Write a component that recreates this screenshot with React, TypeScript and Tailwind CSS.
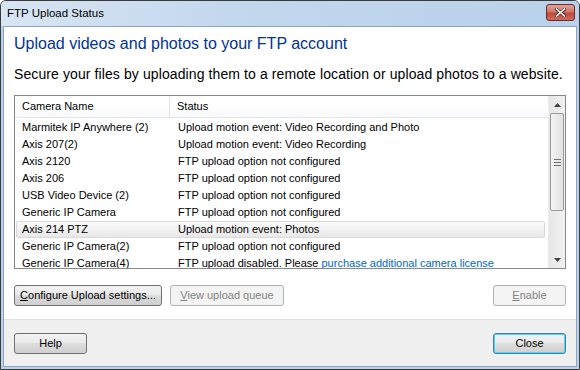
import { FC, ReactNode } from 'react';

const rows: { name: string; status: ReactNode; selected?: boolean }[] = [
  { name: 'Marmitek IP Anywhere (2)', status: 'Upload motion event: Video Recording and Photo' },
  { name: 'Axis 207(2)', status: 'Upload motion event: Video Recording' },
  { name: 'Axis 2120', status: 'FTP upload option not configured' },
  { name: 'Axis 206', status: 'FTP upload option not configured' },
  { name: 'USB Video Device (2)', status: 'FTP upload option not configured' },
  { name: 'Generic IP Camera', status: 'FTP upload option not configured' },
  { name: 'Axis 214 PTZ', status: 'Upload motion event: Photos', selected: true },
  { name: 'Generic IP Camera(2)', status: 'FTP upload option not configured' },
  {
    name: 'Generic IP Camera(4)',
    status: (
      <>
        FTP upload disabled. Please <span className="text-[#0066cc]">purchase additional camera license</span>
      </>
    ),
  },
];

interface BtnProps {
  children: ReactNode;
  width: string;
  disabled?: boolean;
  focused?: boolean;
}

const Btn: FC<BtnProps> = ({ children, width, disabled, focused }) => {
  if (disabled) {
    return (
      <div
        className={`${width} h-[21px] flex items-center justify-center whitespace-nowrap rounded-[3px] border border-[#adb2b5] bg-[#f4f4f4] text-[#838383]`}
      >
        {children}
      </div>
    );
  }
  return (
    <div
      className={`${width} h-[21px] flex items-center justify-center whitespace-nowrap rounded-[3px] border ${
        focused ? 'border-[#3c7fb1] shadow-[inset_0_0_0_1px_#48d8fb]' : 'border-[#707070]'
      } bg-[linear-gradient(#f2f2f2_0%,#ebebeb_45%,#dddddd_50%,#cfcfcf_100%)] text-black`}
    >
      {children}
    </div>
  );
};

const App: FC = () => {
  return (
    <div
      className="w-[580px] h-[370px] flex flex-col bg-[#bcd2ea] border border-[#3a3a3a] rounded-t-[6px] overflow-hidden text-[11px] text-black"
      style={{ fontFamily: '"Liberation Sans", Arial, sans-serif' }}
    >
      {/* Title bar */}
      <div className="h-[25px] shrink-0 flex items-center justify-between pl-[6px] pr-[4px] bg-[linear-gradient(90deg,#d8e5f3_0%,#c3d7ed_40%,#b9d1ea_100%)]">
        <span className="text-[11.5px] text-black">FTP Upload Status</span>
        <div className="w-[29px] h-[17px] -mt-[3px] flex items-center justify-center rounded-[3px] border border-[#6b2b2b] bg-[linear-gradient(#e0a197_0%,#d0766a_45%,#c14a3c_55%,#cf6b5c_100%)]">
          <svg width="11" height="9" viewBox="0 0 11 9">
            <path d="M1 1 L10 8 M10 1 L1 8" stroke="#4a2020" strokeWidth="3" strokeLinecap="square" />
            <path d="M1.5 1 L9.5 8 M9.5 1 L1.5 8" stroke="#ffffff" strokeWidth="1.6" strokeLinecap="square" />
          </svg>
        </div>
      </div>

      {/* Client area */}
      <div className="flex-1 flex flex-col mx-[2px] mb-[2px] border border-[#8ba6c4]">
        <div className="h-[292px] shrink-0 bg-white px-[10px] flex flex-col">
          <div className="mt-[6px] text-[16px] leading-[22px] text-[#003399]">
            Upload videos and photos to your FTP account
          </div>
          <div className="mt-[10px] text-[14px] leading-[18px] tracking-[0.1px]">
            Secure your files by uploading them to a remote location or upload photos to a website.
          </div>

          {/* List view */}
          <div className="mt-[12px] h-[174px] border border-[#828790] flex">
            <div className="flex-1 flex flex-col overflow-hidden">
              <div className="h-[22px] shrink-0 flex border-b border-[#e5e5e5] bg-[linear-gradient(#ffffff_0%,#ffffff_50%,#f7f8fa_100%)]">
                <div className="w-[155px] pl-[7px] flex items-center border-r border-[#e5e5e5]">Camera Name</div>
                <div className="flex-1 pl-[7px] flex items-center">Status</div>
              </div>
              <div className="flex flex-col pt-[1px] pl-[1px] pr-[3px]">
                {rows.map((r) => (
                  <div
                    key={r.name}
                    className={`h-[17px] shrink-0 flex items-center rounded-[2px] ${
                      r.selected
                        ? 'border border-[#d9d9d9] bg-[linear-gradient(#fafafa,#e8e8e8)]'
                        : 'border border-transparent'
                    }`}
                  >
                    <div className="w-[154px] pl-[5px] whitespace-nowrap">{r.name}</div>
                    <div className="flex-1 pl-[7px] whitespace-nowrap">{r.status}</div>
                  </div>
                ))}
              </div>
            </div>

            {/* Scrollbar */}
            <div className="w-[17px] shrink-0 flex flex-col bg-[linear-gradient(90deg,#e6e6e6,#f2f2f2)] border-l border-[#ececec]">
              <div className="h-[17px] flex items-center justify-center">
                <svg width="7" height="4" viewBox="0 0 7 4">
                  <path d="M0 4 L3.5 0 L7 4 Z" fill="#404040" />
                </svg>
              </div>
              <div className="mx-[1px] h-[98px] rounded-[2px] border border-[#9a9a9a] bg-[linear-gradient(90deg,#f4f4f4,#e2e2e2)] flex items-center justify-center">
                <svg width="7" height="7" viewBox="0 0 7 7">
                  <path d="M0 0.5 H7 M0 3.5 H7 M0 6.5 H7" stroke="#707070" strokeWidth="1" />
                </svg>
              </div>
              <div className="flex-1" />
              <div className="h-[17px] flex items-center justify-center">
                <svg width="7" height="4" viewBox="0 0 7 4">
                  <path d="M0 0 L3.5 4 L7 0 Z" fill="#404040" />
                </svg>
              </div>
            </div>
          </div>

          {/* Action buttons */}
          <div className="mt-[16px] flex items-center">
            <Btn width="w-[148px]">
              <span>
                <u>C</u>onfigure Upload settings...
              </span>
            </Btn>
            <div className="ml-[8px]">
              <Btn width="w-[114px]" disabled>
                <span>
                  <u>V</u>iew upload queue
                </span>
              </Btn>
            </div>
            <div className="ml-auto">
              <Btn width="w-[73px]" disabled>
                <span>
                  <u>E</u>nable
                </span>
              </Btn>
            </div>
          </div>
        </div>

        {/* Footer */}
        <div className="flex-1 bg-[#f0f0f0] border-t border-[#dfdfdf] px-[10px] flex items-center justify-between">
          <Btn width="w-[73px]">Help</Btn>
          <Btn width="w-[73px]" focused>
            Close
          </Btn>
        </div>
      </div>
    </div>
  );
};

export default App;
